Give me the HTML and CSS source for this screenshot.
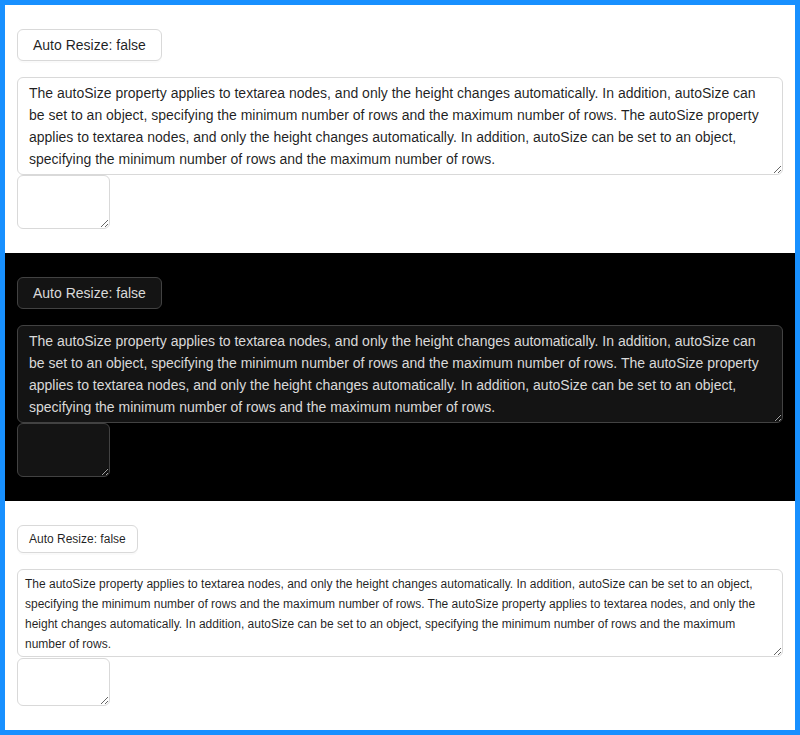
FILE: index.html
```html
<!DOCTYPE html>
<html>
<head>
<meta charset="utf-8">
<link rel="stylesheet" href="styles.css">
</head>
<body>
<div class="frame">
  <section class="panel light">
    <button class="btn">Auto Resize: false</button>
    <textarea class="ta ta-main">The autoSize property applies to textarea nodes, and only the height changes automatically. In addition, autoSize can be set to an object, specifying the minimum number of rows and the maximum number of rows. The autoSize property applies to textarea nodes, and only the height changes automatically. In addition, autoSize can be set to an object, specifying the minimum number of rows and the maximum number of rows.</textarea>
    <textarea class="ta ta-empty"></textarea>
  </section>
  <section class="panel dark">
    <button class="btn">Auto Resize: false</button>
    <textarea class="ta ta-main">The autoSize property applies to textarea nodes, and only the height changes automatically. In addition, autoSize can be set to an object, specifying the minimum number of rows and the maximum number of rows. The autoSize property applies to textarea nodes, and only the height changes automatically. In addition, autoSize can be set to an object, specifying the minimum number of rows and the maximum number of rows.</textarea>
    <textarea class="ta ta-empty"></textarea>
  </section>
  <section class="panel light small">
    <button class="btn">Auto Resize: false</button>
    <textarea class="ta ta-main">The autoSize property applies to textarea nodes, and only the height changes automatically. In addition, autoSize can be set to an object, specifying the minimum number of rows and the maximum number of rows. The autoSize property applies to textarea nodes, and only the height changes automatically. In addition, autoSize can be set to an object, specifying the minimum number of rows and the maximum number of rows.</textarea>
    <textarea class="ta ta-empty"></textarea>
  </section>
</div>
</body>
</html>
```
FILE: styles.css
```css
* { box-sizing: border-box; }
html, body { margin: 0; padding: 0; }
body {
  width: 800px;
  height: 735px;
  font-family: "Liberation Sans", Arial, sans-serif;
}
.frame {
  border: 5px solid #1890ff;
  height: 735px;
  display: flex;
  flex-direction: column;
  background: #fff;
}
.panel {
  padding: 24px 12px;
  display: flex;
  flex-direction: column;
  align-items: flex-start;
}
.light { background: #fff; color: rgba(0,0,0,0.88); }
.dark { background: #000; color: rgba(255,255,255,0.85); }
.btn {
  font-family: inherit;
  font-size: 14px;
  height: 32px;
  padding: 0 15px;
  border-radius: 6px;
  border: 1px solid #d9d9d9;
  background: #fff;
  color: rgba(0,0,0,0.88);
  box-shadow: 0 2px 0 rgba(0,0,0,0.02);
  margin: 0 0 16px 0;
  cursor: pointer;
}
.ta {
  display: block;
  font-family: inherit;
  font-size: 14px;
  line-height: 22px;
  padding: 4px 11px;
  border: 1px solid #d9d9d9;
  border-radius: 6px;
  background: #fff;
  color: rgba(0,0,0,0.88);
  margin: 0;
  overflow: hidden;
}
.ta-main { width: 100%; height: 98px; }
.ta-empty { width: 93px; height: 54px; }
.dark .btn {
  background: #141414;
  border-color: #424242;
  color: rgba(255,255,255,0.85);
}
.dark .ta {
  background: #141414;
  border-color: #424242;
  color: rgba(255,255,255,0.85);
}
.small .btn {
  font-size: 12px;
  height: 28px;
  padding: 0 11px;
}
.small .ta {
  font-size: 12px;
  line-height: 20px;
  padding: 4px 7px;
}
.small .ta-main { height: 88px; margin-bottom: 1px; }
.small .ta-empty { height: 48px; }
```
